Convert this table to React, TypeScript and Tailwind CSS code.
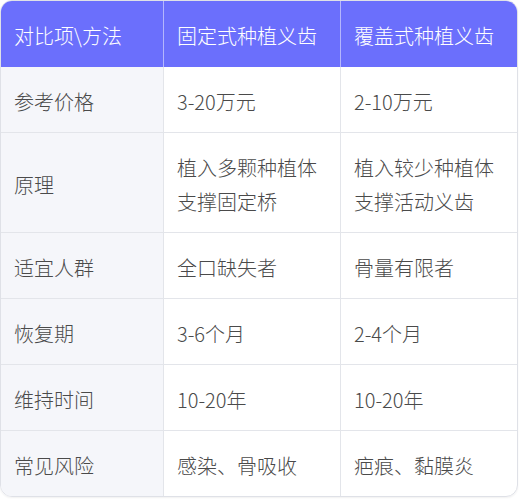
import React from "react";

const rows: Array<{ label: string; fixed: string[]; cover: string[] }> = [
  { label: "参考价格", fixed: ["3-20万元"], cover: ["2-10万元"] },
  { label: "原理", fixed: ["植入多颗种植体", "支撑固定桥"], cover: ["植入较少种植体", "支撑活动义齿"] },
  { label: "适宜人群", fixed: ["全口缺失者"], cover: ["骨量有限者"] },
  { label: "恢复期", fixed: ["3-6个月"], cover: ["2-4个月"] },
  { label: "维持时间", fixed: ["10-20年"], cover: ["10-20年"] },
  { label: "常见风险", fixed: ["感染、骨吸收"], cover: ["疤痕、黏膜炎"] },
];

const font = { fontFamily: '"Noto Sans CJK SC", "Noto Sans", sans-serif' };

export default function App() {
  return (
    <div className="w-[519px] h-[500px] bg-white" style={font}>
      <div className="w-[518px] rounded-xl border border-[#dfe1e7] overflow-hidden shadow-[0_1px_2px_rgba(0,0,0,0.06)]">
        <div className="grid grid-cols-[163px_177px_1fr] bg-[#6b6ffc] text-white text-[20px] leading-[34px] font-light">
          <div className="px-[13px] pt-[18px] pb-[14px] border-r border-[#b4b6fd]">对比项\方法</div>
          <div className="px-[13px] pt-[18px] pb-[14px] border-r border-[#b4b6fd]">固定式种植义齿</div>
          <div className="px-[13px] pt-[18px] pb-[14px]">覆盖式种植义齿</div>
        </div>
        {rows.map((row, i) => (
          <div
            key={row.label}
            className={
              "grid grid-cols-[163px_177px_1fr] text-[20px] leading-[34px] font-light text-[#4a4a4a]" +
              (i < rows.length - 1 ? " border-b border-[#e3e5ea]" : "")
            }
          >
            <div className="bg-[#f5f6fa] px-[13px] pt-[18px] pb-[13px] border-r border-[#e3e5ea] flex items-center">
              {row.label}
            </div>
            <div className="px-[13px] pt-[18px] pb-[13px] border-r border-[#e3e5ea]">
              {row.fixed.map((t) => (
                <div key={t}>{t}</div>
              ))}
            </div>
            <div className="px-[13px] pt-[18px] pb-[13px]">
              {row.cover.map((t) => (
                <div key={t}>{t}</div>
              ))}
            </div>
          </div>
        ))}
      </div>
    </div>
  );
}
